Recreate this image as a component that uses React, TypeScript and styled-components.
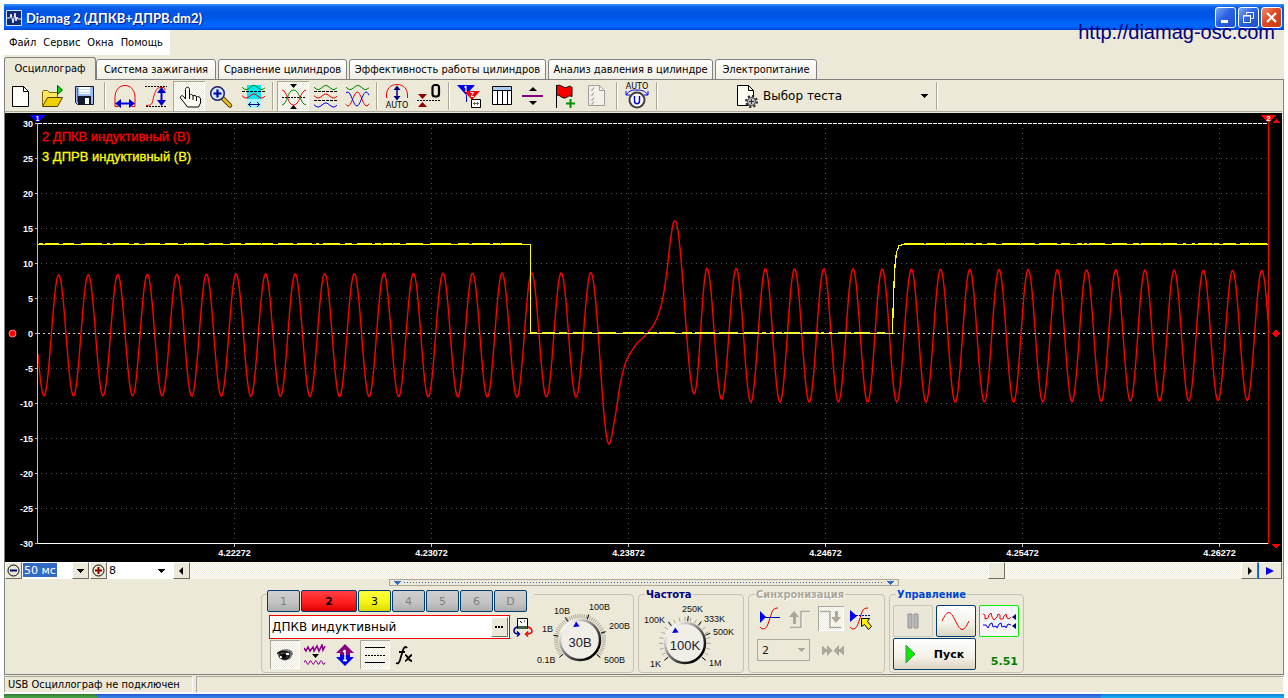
import React, { useLayoutEffect, useMemo, useRef, useState } from "react";
import styled, { createGlobalStyle, css } from "styled-components";

const face = "#ece9d8";
const uiFont = `"DejaVu Sans Condensed", "DejaVu Sans", sans-serif`;
const wideFont = `"DejaVu Sans", sans-serif`;
const plotFont = `"Liberation Sans", sans-serif`;
const checker = `repeating-conic-gradient(#ffffff 0 25%, ${face} 0 50%) 0 0 / 2px 2px`;

const GlobalStyle = createGlobalStyle`
  *, *::before, *::after { box-sizing: border-box; }
  body { margin: 0; background: #fff; color: #000; font: 11px ${uiFont}; }
  button, select, input { font: inherit; color: inherit; margin: 0; padding: 0; border-radius: 0; }
  svg { display: block; flex: none; }
`;

const Window = styled.div`
  min-height: 100vh;
  padding: 4px 4px 0;
  display: flex;
  flex-direction: column;
`;

/* ---------- title and menu ---------- */

const TitleBar = styled.header`
  position: relative;
  height: 26px;
  padding: 1px 2px 0 2px;
  display: flex;
  align-items: center;
  gap: 4px;
  background: linear-gradient(#3c94fb 0, #0b62ee 3px, #0054e3 8px, #0058ea 14px, #0066ff 20px, #0064fb 23px, #0042d0 26px);
`;

const Title = styled.h1`
  flex: 1;
  margin: 0;
  font: bold 13px/20px Lato, sans-serif;
  color: #fff;
  text-shadow: 1px 1px 1px #0a1883;
`;

const WindowButtons = styled.div`
  display: flex;
  gap: 2px;
`;

const WindowButton = styled.button<{ $danger?: boolean }>`
  width: 21px;
  height: 21px;
  display: grid;
  place-items: center;
  border: 1px solid #fff;
  border-radius: 3px;
  background: ${(p) =>
    p.$danger
      ? "linear-gradient(135deg, #eb8f77, #df4a22 45%, #c03a10)"
      : "linear-gradient(135deg, #7fa6f4, #2a63e2 45%, #1c4fd0)"};
`;

const SiteLink = styled.a`
  position: absolute;
  right: 9px;
  top: 16px;
  font: 20px/24px ${plotFont};
  color: #000080;
  text-decoration: none;
`;

const MenuRow = styled.div`
  height: 27px;
  background: ${face};
`;

const Menu = styled.nav`
  width: fit-content;
  height: 25px;
  padding: 0 7px 0 5px;
  display: flex;
  align-items: center;
  gap: 7px;
  background: #fff;
`;

const MenuItem = styled.button`
  border: 0;
  background: none;
  line-height: 16px;
`;

/* ---------- tabs and toolbar ---------- */

const Tabs = styled.div`
  height: 23px;
  display: flex;
  align-items: flex-end;
  gap: 2px;
  background: ${face};
  box-shadow: inset 0 -1px #808080;
`;

const Tab = styled.button<{ $width: number; $active?: boolean }>`
  width: ${(p) => p.$width}px;
  height: 21px;
  border: 1px solid #808080;
  border-radius: 3px 3px 0 0;
  background: linear-gradient(#ffffff, #f1efe4);
  line-height: 16px;
  white-space: nowrap;
  ${(p) =>
    p.$active &&
    css`
      height: 23px;
      margin-right: -2px;
      border-bottom: 0;
      background: ${face};
    `}
`;

const Page = styled.main`
  flex: 1;
  padding-right: 1px;
  display: flex;
  flex-direction: column;
  border: 1px solid #808080;
  border-top: 0;
  background: ${face};
`;

const Toolbar = styled.div`
  height: 32px;
  display: flex;
  align-items: center;
  border-bottom: 1px solid #aca899;
`;

const ToolButton = styled.button<{ $pressed?: boolean }>`
  width: 32px;
  height: 30px;
  border: 0;
  background: ${(p) => (p.$pressed ? checker : "none")};
  box-shadow: ${(p) => (p.$pressed ? "inset 1px 1px #aca899, inset -1px -1px #fff" : "none")};
`;

const Separator = styled.span`
  width: 8px;
  height: 28px;
  background: linear-gradient(90deg, transparent 3px, #aca899 3px 4px, #fff 4px 5px, transparent 5px);
`;

const TestPicker = styled.label`
  position: relative;
  width: 202px;
  margin-left: 70px;
  display: flex;
  align-items: center;
  gap: 4px;
`;

const TestSelect = styled.select`
  flex: 1;
  height: 28px;
  border: 0;
  appearance: none;
  background: none;
  font: 12px ${wideFont};
`;

const CaretOver = styled.span`
  position: absolute;
  right: 5px;
  pointer-events: none;
`;

/* ---------- oscilloscope ---------- */

const Scope = styled.div`
  flex: 1 0 449px;
  margin-top: 1px;
  display: flex;
  background: #000;
  overflow: hidden;
`;

const Plot = styled.svg`
  flex: 1 1 0;
  min-width: 0;
  font-family: ${plotFont};
`;

const ScrollRow = styled.div`
  height: 17px;
  display: flex;
`;

const Raised = styled.button<{ $width: number }>`
  width: ${(p) => p.$width}px;
  height: 17px;
  display: grid;
  place-items: center;
  border: 1px solid;
  border-color: #fff #716f64 #716f64 #fff;
  background: ${face};
`;

const PlayButton = styled(Raised)`
  border-left: 1px solid #0054e3;
`;

const Combo = styled.div<{ $width: number }>`
  position: relative;
  width: ${(p) => p.$width}px;
  background: #fff;
`;

const ComboSelect = styled.select<{ $selected?: boolean }>`
  width: 100%;
  height: 17px;
  padding-left: 2px;
  border: 0;
  appearance: none;
  font: 11px/15px ${wideFont};
  ${(p) =>
    p.$selected
      ? css`
          color: #fff;
          background: linear-gradient(#316ac5, #316ac5) no-repeat 1px 1px / 34px 14px #fff;
        `
      : css`
          background: #fff;
        `}
`;

const ComboArrow = styled.span<{ $raised?: boolean }>`
  position: absolute;
  right: ${(p) => (p.$raised ? 1 : 3)}px;
  top: 0;
  width: 17px;
  height: 17px;
  display: grid;
  place-items: center;
  pointer-events: none;
  ${(p) =>
    p.$raised &&
    css`
      border: 1px solid;
      border-color: #fff #716f64 #716f64 #fff;
      background: ${face};
    `}
`;

const ScrollTrack = styled.input`
  flex: 1;
  min-width: 0;
  height: 17px;
  appearance: none;
  background: ${checker};
  &::-webkit-slider-thumb {
    appearance: none;
    width: 17px;
    height: 17px;
    border: 1px solid;
    border-color: #fff #716f64 #716f64 #fff;
    background: ${face};
  }
`;

const Splitter = styled.div`
  width: 510px;
  height: 7px;
  margin: 0 auto;
  padding: 0 4px;
  display: flex;
  align-items: center;
  gap: 3px;
  border: 1px solid #aca899;
`;

const SplitterDots = styled.span`
  flex: 1;
  height: 1px;
  background: repeating-linear-gradient(90deg, #316ac5 0 1px, transparent 1px 3px);
`;

/* ---------- control groups ---------- */

const Panel = styled.div`
  display: flex;
  justify-content: center;
  align-items: flex-start;
  gap: 4px;
  padding: 8px 2px 1px 0;
`;

const Group = styled.section<{ $width: number }>`
  width: ${(p) => p.$width}px;
  height: 79px;
  border: 1px solid #c6c3b5;
  border-radius: 4px;
`;

const ChannelGroup = styled(Group)`
  display: flex;
`;

const GroupTitle = styled.h2<{ $color: string; $etched?: boolean }>`
  width: fit-content;
  height: 14px;
  margin: -8px 0 0 6px;
  padding: 0 1px;
  background: ${face};
  color: ${(p) => p.$color};
  font: bold 11px/16px ${uiFont};
  text-shadow: ${(p) => (p.$etched ? "1px 1px #fff" : "none")};
`;

const Channel = styled.div`
  width: 272px;
`;

const ChannelTabs = styled.div`
  margin: -5px 0 0 5px;
  display: flex;
  gap: 1px;
  background: ${face};
`;

const ChannelButton = styled.button<{ $tone?: "red" | "yellow" }>`
  width: ${(p) => (p.$tone === "red" ? 56 : 33)}px;
  height: 22px;
  border: 1px solid #003c74;
  border-radius: 2px;
  font: ${(p) => (p.$tone === "red" ? "bold" : "normal")} 11px ${wideFont};
  color: ${(p) => (p.$tone ? "#000" : "#808080")};
  background: ${(p) =>
    p.$tone === "red"
      ? "linear-gradient(#ff4040, #ff1c1c 60%, #dd0000)"
      : p.$tone === "yellow"
        ? "linear-gradient(#ffff40, #f4f410 60%, #d8d800)"
        : "linear-gradient(#cfcfcf, #c3c3c3 60%, #adadad)"};
`;

const NameRow = styled.div`
  margin: 3px 0 0 7px;
  display: flex;
  align-items: center;
  gap: 3px;
`;

const NameBox = styled.div`
  width: 241px;
  height: 24px;
  padding-right: 1px;
  display: flex;
  align-items: center;
  border: 1px solid #f00000;
  background: #fff;
`;

const NameInput = styled.input`
  flex: 1;
  min-width: 0;
  height: 20px;
  padding-left: 2px;
  border: 0;
  outline: 0;
  background: none;
  font: 12px ${wideFont};
`;

const MoreButton = styled(Raised)`
  height: 20px;
`;

const PlainButton = styled.button`
  border: 0;
  background: none;
`;

const IconRow = styled.div`
  margin: 1px 0 0 8px;
  display: flex;
`;

const SmallTool = styled.button<{ $pressed?: boolean; $width: number; $height: number }>`
  width: ${(p) => p.$width}px;
  height: ${(p) => p.$height}px;
  display: grid;
  place-items: center;
  border: 0;
  background: ${(p) => (p.$pressed ? checker : "none")};
  box-shadow: ${(p) => (p.$pressed ? "inset 1px 1px #aca899, inset -1px -1px #fff" : "none")};
`;

const SyncTools = styled.div`
  padding: 5px 10px 0 8px;
  display: flex;
  justify-content: space-between;
`;

const SyncRow = styled.div`
  padding: 8px 8px 0;
  display: flex;
  align-items: center;
  gap: 11px;
`;

const SyncCombo = styled.label`
  position: relative;
  width: 53px;
  display: flex;
  align-items: center;
`;

const SyncSelect = styled.select`
  width: 100%;
  height: 22px;
  padding-left: 4px;
  border: 1px solid #aca899;
  appearance: none;
  background: ${face};
  color: #202020;
  font: 11px ${wideFont};
`;

const RunGrid = styled.div`
  padding: 4px 3px 0;
  display: grid;
  grid-template-columns: 40px 40px 40px;
  grid-auto-rows: 32px;
  gap: 1px 3px;
`;

const RunButton = styled.button<{ $kind?: "disabled" | "selected"; $wide?: boolean }>`
  grid-column: span ${(p) => (p.$wide ? 2 : 1)};
  display: flex;
  align-items: center;
  justify-content: center;
  gap: 18px;
  border: 1px solid ${(p) => (p.$kind === "disabled" ? "#c9c7ba" : p.$kind === "selected" ? "#00f000" : "#003c74")};
  border-radius: 2px;
  background: ${(p) =>
    p.$kind === "disabled" ? "#eae7d9" : p.$kind === "selected" ? "#f5f4f8" : "linear-gradient(#ffffff, #f3f1e8 60%, #dcd6bf)"};
  font: bold 11px ${wideFont};
`;

const Reading = styled.output`
  align-self: end;
  padding-right: 1px;
  text-align: right;
  color: #008000;
  font: bold 11px/16px ${wideFont};
`;

/* ---------- status ---------- */

const StatusBar = styled.footer`
  height: 18px;
  padding-top: 1px;
  display: flex;
  gap: 3px;
  background: ${face};
`;

const StatusCell = styled.div<{ $grow?: boolean }>`
  flex: ${(p) => (p.$grow ? "1" : "0 0 189px")};
  padding-left: 3px;
  line-height: 16px;
  border: 1px solid;
  border-color: #aca899 #fff #fff #aca899;
`;

const TaskBar = styled.div`
  height: 5px;
  display: grid;
  grid-template-columns: 93px 1fr 183px;
  border-top: 1px solid #fff;
  background: linear-gradient(#1f5ad0, #3c86ea);
  & > :first-child { background: linear-gradient(#2f7a2f, #4ea84c); border-radius: 0 3px 0 0; }
  & > :last-child { background: linear-gradient(#0e7bd6, #18b4f4); }
`;

/* ---------- icons ---------- */

const wave = (x0: number, x1: number, y: number, amp: number, periods: number, phase = 0) => {
  let d = "";
  for (let x = x0; x <= x1; x += 1) {
    const v = y - amp * Math.sin(((x - x0) / (x1 - x0)) * periods * 2 * Math.PI + phase);
    d += `${d ? "L" : "M"}${x} ${v.toFixed(1)}`;
  }
  return d;
};

const Icon = ({ children, w = 32, h = 30 }: { children: React.ReactNode; w?: number; h?: number }) => (
  <svg width={w} height={h} viewBox={`0 0 ${w} ${h}`} fill="none" stroke="#000" aria-hidden="true">
    {children}
  </svg>
);

const Caret = ({ color = "#000" }: { color?: string }) => (
  <svg width="7" height="4" viewBox="0 0 7 4" shapeRendering="crispEdges" aria-hidden="true">
    <path d="M0 0h7L3.5 4z" fill={color} />
  </svg>
);

const red = "#f00000";
const green = "#008a00";
const blue = "#0000f0";

const NewIcon = () => (
  <Icon>
    <path d="M7.5 5.5h11l5 5v15h-16z" fill="#fffffa" />
    <path d="M18.5 5.5v5h5" />
  </Icon>
);
const OpenIcon = () => (
  <Icon>
    <path d="M5.5 24.5v-14l1-1h4l2 2h8v5" fill="#ffe860" stroke="#806000" />
    <path d="M5.5 25.5l5-9h15l-5 9z" fill="#f0d000" stroke="#504000" />
    <path d="M20.5 4.5l5 4.5-5 4.5z" fill="#00d800" stroke="#005000" />
  </Icon>
);
const SaveIcon = () => (
  <Icon>
    <path d="M6.5 5.5h18v18h-16l-2-2z" fill="#9dbcf0" stroke="#101830" />
    <path d="M10 6h11v7H10z" fill="#fff" stroke="none" />
    <path d="M10 8.5h11M10 11.5h11" stroke="#c8d8f0" />
    <path d="M9 15h13v8H9z" fill="#101830" stroke="none" />
    <path d="M16 17h4v6h-4z" fill="#fff" stroke="none" />
    <path d="M8.5 7v14" stroke="#3f68c0" />
  </Icon>
);
const PeriodIcon = () => (
  <Icon>
    <path d="M9.5 25.5h-3.5v-9c0-7 4-12 10-12s10 5 10 12v9h-3.5" stroke={red} />
    <path d="M10 22.5h12" stroke={blue} strokeWidth="2" />
    <path d="M6 22.5l6-4.500v9zM26 22.5l-6-4.5v9z" fill="#0000c8" stroke="none" />
  </Icon>
);
const AmplitudeIcon = () => (
  <Icon>
    <path d="M4 5.5h22M5 25.5h20" strokeDasharray="2 1" />
    <path d="M5 24.5c8 0 6-4 8-10s3-8 7-8h2c2 0 2 2 2 3" stroke={red} />
    <path d="M20.5 10v12" stroke={blue} strokeWidth="2" />
    <path d="M20.5 6l4.5 6h-9zM20.5 25l4.5-6h-9z" fill="#0000c8" stroke="none" />
  </Icon>
);
const HandIcon = () => (
  <Icon>
    <path
      d="M12.5 18V8.5c0-3 4-3 4 0v5.5c1-1 3.5-.5 3.5 1c1-1 3.5-.5 3.5 1c1.5-1 4 0 4 2v4l-2 4h-11l-3-4-4-5c-.5-2.5 2-3 3.5-1z"
      fill="#fffdf4"
    />
    <path d="M16.5 14v4M20 15v4M23.5 16v4" />
  </Icon>
);
const ZoomIcon = () => (
  <Icon>
    <path d="M18 17.5l7 7" stroke="#403000" strokeWidth="4.5" strokeLinecap="round" />
    <path d="M18 17.5l7 7" stroke="#f0c020" strokeWidth="2.5" strokeLinecap="round" />
    <circle cx="12.5" cy="12.5" r="6.8" fill="#cfe8ff" stroke="#202060" strokeWidth="1.5" />
    <path d="M8.5 12.5h8M12.5 8.5v8" stroke="#0000a8" strokeWidth="2.2" />
  </Icon>
);
const WindowIcon = () => (
  <Icon>
    <path d="M10 4h14v14H10z" fill="#00e8f8" stroke="none" />
    <path d="M10 18h14v9H10z" fill="#a8f4fc" stroke="none" />
    <path d={wave(5, 28, 6.5, 2, 1.5, 3)} stroke={green} />
    <path d="M5 10.5h24" strokeDasharray="3 1" />
    <path d={wave(5, 28, 15, 2, 1.5, 3)} stroke={red} />
    <path d="M11 23.5h12M14 21l-2.5 2.5L14 26M20 21l2.5 2.5L20 26" stroke="#000090" />
  </Icon>
);
const CrossIcon = () => (
  <Icon>
    <path d="M5 16.5h24" strokeDasharray="2 1" />
    <path d="M5 9c6 1 5 15 11.5 15S23 10 29 9" stroke={red} />
    <path d="M5 24c6-1 5-15 11.5-15S23 23 29 24" stroke={green} />
    <path d="M13 3h7l-3.5 4zM13 28h7l-3.5-4z" fill="#000" stroke="none" />
  </Icon>
);
const ThreeWavesIcon = () => (
  <Icon>
    <path d={wave(5, 28, 6.5, 2, 1.5, 3)} stroke={green} />
    <path d="M5 10.5h24M5 19.5h24" strokeDasharray="3 1" />
    <path d={wave(5, 28, 15, 2, 1.5, 3)} stroke={red} />
    <path d={wave(5, 28, 24, 2, 1.5, 3)} stroke={blue} />
  </Icon>
);
const OverlayIcon = () => (
  <Icon>
    <path d={wave(5, 28, 6.5, 2, 1.5, 3)} stroke={green} />
    <path d={wave(5, 28, 18, 7, 1.25, 4)} stroke={red} />
    <path d={wave(5, 28, 18, 7, 1.25, 1)} stroke={blue} />
  </Icon>
);
const Tiny = styled.text`
  font: 8px ${wideFont};
  stroke: none;
  fill: #000;
`;
const AutoScaleIcon = () => (
  <Icon>
    <path d="M5.5 17v-3c0-6 4-10.5 10.5-10.5S26.5 8 26.5 14v3" stroke={red} />
    <path d="M16 8v8" stroke="#000080" strokeWidth="1.5" />
    <path d="M16 4.5l3.5 4.5h-7zM16 19.5l3.5-4.5h-7z" fill="#000080" stroke="none" />
    <Tiny x="16" y="27" textAnchor="middle">AUTO</Tiny>
  </Icon>
);
const ZeroIcon = () => (
  <Icon>
    <rect x="19.5" y="4" width="6.5" height="11.5" rx="2.5" strokeWidth="2.2" />
    <path d="M4 19.5h24" strokeDasharray="2 1" />
    <path d="M5 13h9l-4.5 5zM5 26h9l-4.5-5z" fill="#900000" stroke="none" />
  </Icon>
);
const MarkersIcon = () => (
  <Icon>
    <path d="M4 4h18l-9 10z" fill={blue} stroke="none" />
    <path d="M11 10h16l-8 9z" fill={red} stroke="none" />
    <path d="M13.5 14v7" stroke={blue} />
    <path d="M13 5v6M11.5 6.5L13 5" stroke="#fff" strokeWidth="1.2" />
    <path d="M17.5 11.5h3l-2.5 4h3" stroke="#fff" />
    <path d="M18.5 18.5h9v8h-9z" fill="#fff" />
    <path d="M20 22.5h6M21.5 21v3M24.5 21v3" stroke="#606060" />
  </Icon>
);
const TableIcon = () => (
  <Icon>
    <path d="M7.5 5.5h19v18h-19z" fill="#fff" />
    <path d="M8 6h18v3H8z" fill="#a8ccf4" stroke="none" />
    <path d="M7 9.5h20M12.5 10v14M17.5 10v14M22.5 10v14" />
  </Icon>
);
const LevelIcon = () => (
  <Icon>
    <path d="M5 15h21" stroke="#800080" strokeWidth="2" />
    <path d="M12 10h8l-4-4zM12 20h8l-4 4z" fill="#000" stroke="none" />
  </Icon>
);
const FlagIcon = () => (
  <Icon>
    <path d="M7.5 5c4-3 7 3 10 1.5s4-2 5.5 0v9c-4-2-5 2-8 1.5S10 13 7.5 14.5z" fill="#f80000" />
    <path d="M7.5 4v23" />
    <path d="M21.5 18v9M17 22.5h9" stroke="#009000" strokeWidth="2" />
  </Icon>
);
const ChecklistIcon = () => (
  <Icon>
    <path d="M7.5 4.5h11l5 5v15h-16z" fill="#f4f2e8" stroke="#a0a0a0" />
    <path d="M18.5 4.5v5h5" stroke="#a0a0a0" />
    <path d="M10 8.5l1 1 2-3M10 13.5l1 1 2-3M10 18.5l1 1 2-3M10 22.5l1 1 2-3" stroke="#909090" />
  </Icon>
);
const AutoKnobIcon = () => (
  <Icon>
    <Tiny x="16" y="8" textAnchor="middle">AUTO</Tiny>
    <path d="M5 14c4-5 6-5 11-5s8 1 11 5M5 10v4h4M27 10v4h-4" stroke={blue} />
    <circle cx="16" cy="19" r="7.5" fill="#fff" stroke="#404040" strokeWidth="2" />
    <path d="M13.5 15v5c0 3.5 5 3.5 5 0v-5" stroke={blue} strokeWidth="1.5" />
  </Icon>
);

type Tool = [string, React.FC, boolean?];
const toolGroups: Tool[][] = [
  [["Новый", NewIcon], ["Открыть", OpenIcon], ["Сохранить", SaveIcon]],
  [["Период", PeriodIcon], ["Амплитуда", AmplitudeIcon], ["Перемещение", HandIcon, true], ["Масштаб", ZoomIcon], ["Окно", WindowIcon]],
  [["Общий ноль", CrossIcon, true], ["Раздельно", ThreeWavesIcon], ["Наложение", OverlayIcon]],
  [["Автомасштаб", AutoScaleIcon], ["Ноль", ZeroIcon]],
  [["Маркеры", MarkersIcon], ["Таблица", TableIcon], ["Уровень", LevelIcon], ["Флаг", FlagIcon], ["Список", ChecklistIcon]],
  [["Авто", AutoKnobIcon]],
];

/* ---------- waveforms: x in steps along the sweep, y in volts ---------- */

const SWEEP = 1231;
type Pt = [number, number];

const between = (a: Pt, b: Pt): Pt[] => {
  const out: Pt[] = [];
  for (let x = Math.ceil(a[0]); x < b[0]; x += 1) {
    const t = (x - a[0]) / (b[0] - a[0]);
    out.push([x, a[1] + ((b[1] - a[1]) * (1 - Math.cos(Math.PI * t))) / 2]);
  }
  return out;
};

/* Hermite interpolation through unevenly spaced samples, flat at both ends. */
const smooth = (pts: Pt[]): Pt[] => {
  const slope = (i: number) =>
    i === 0 || i === pts.length - 1 ? 0 : (pts[i + 1][1] - pts[i - 1][1]) / (pts[i + 1][0] - pts[i - 1][0]);
  const out: Pt[] = [];
  for (let i = 0; i < pts.length - 1; i += 1) {
    const [x0, y0] = pts[i];
    const [x1, y1] = pts[i + 1];
    const h = x1 - x0;
    for (let x = x0; x < x1; x += 1) {
      const t = (x - x0) / h;
      const t2 = t * t;
      const t3 = t2 * t;
      out.push([
        x,
        (2 * t3 - 3 * t2 + 1) * y0 + (t3 - 2 * t2 + t) * h * slope(i) + (3 * t2 - 2 * t3) * y1 + (t3 - t2) * h * slope(i + 1),
      ]);
    }
  }
  return out;
};

const crankSignal = (): Pt[] => {
  const before: Pt[] = [];
  for (let k = -1; k <= 18; k += 1) {
    const x = 20.7 + k * 29.56;
    before.push([x, 8.4 + Math.max(0, k) * 0.016]);
    if (k < 18) before.push([x + 14.8, -8.9 - Math.max(0, k) * 0.012]);
  }
  before.push([571, -15.8]);
  const gap: Pt[] = [
    [571, -15.8], [577, -12], [582, -7.4], [587, -4.4], [592, -2.9], [599, -1.4], [605, -0.6], [610, 0.2],
    [615, 1.1], [620, 2.6], [625, 5.2], [629, 9], [632, 12.8], [635, 15.6], [637, 16.1],
  ];
  const after: Pt[] = [[637, 16.1], [656.3, -8.6]];
  for (let k = 0; k <= 20; k += 1) {
    const x = 669 + k * 29.2;
    after.push([x, 9.3 - k * 0.015]);
    after.push([x + 14.6, k === 0 ? -9.4 : -9.8 + Math.max(0, k - 10) * 0.03]);
  }
  const pts: Pt[] = [];
  for (let i = 1; i < before.length; i += 1) pts.push(...between(before[i - 1], before[i]));
  pts.push(...smooth(gap));
  for (let i = 1; i < after.length; i += 1) pts.push(...between(after[i - 1], after[i]));
  return pts.filter(([x]) => x >= 0 && x <= SWEEP);
};

const camSignal: Pt[] = [
  [0, 12.7], [492.5, 12.7], [492.5, 0.05], [854.5, 0.05], [855, 3], [856, 7], [857, 9.7], [858.5, 11.6], [861, 12.5],
  [865, 12.7], [1231, 12.7],
];

const noiseRuns = (from: number, to: number, seed: number): Pt[] => {
  const out: Pt[] = [];
  let s = seed;
  let x = from;
  while (x < to - 12) {
    s = (s * 16807) % 2147483647;
    const len = 3 + (s % 19);
    out.push([x, Math.min(x + len, to)]);
    x += len + 1 + ((s >> 5) % 7);
  }
  return out;
};

const ScopePlot = () => {
  const box = useRef<HTMLDivElement>(null);
  const [size, setSize] = useState({ w: 1277, h: 449 });
  useLayoutEffect(() => {
    const el = box.current;
    if (!el) return;
    const measure = () => setSize({ w: el.clientWidth, h: el.clientHeight });
    measure();
    const observer = new ResizeObserver(measure);
    observer.observe(el);
    return () => observer.disconnect();
  }, []);

  const left = 33;
  const right = size.w - 13;
  const top = 10;
  const bottom = size.h - 19;
  const px = (x: number) => left + (x / SWEEP) * (right - left);
  const py = (v: number) => top + ((30 - v) / 60) * (bottom - top);
  const mid = Math.round(py(0)) + 0.5;
  const crank = useMemo(crankSignal, []);
  const line = (pts: Pt[]) => pts.map(([x, v], i) => `${i ? "L" : "M"}${px(x).toFixed(1)} ${(py(v) + 0.5).toFixed(1)}`).join("");
  const runs = (list: Pt[], v: number) =>
    list.map(([a, b]) => `M${Math.round(px(a))} ${Math.round(py(v)) - 0.5}H${Math.round(px(b))}`).join("");
  const volts = Array.from({ length: 13 }, (_, i) => 30 - i * 5);
  const times = ["4.22272", "4.23072", "4.23872", "4.24672", "4.25472", "4.26272"];
  const timeX = (i: number) => Math.round(px(196 + i * 197)) + 0.5;

  return (
    <Scope ref={box}>
      <Plot role="img" aria-label="Осциллограмма" fill="none" shapeRendering="crispEdges">
        {volts.map((v) => {
          const y = Math.round(py(v)) + 0.5;
          return (
            <g key={v}>
              {v !== 30 && v !== 0 && <path d={`M${left + 3} ${y}H${right}`} stroke="#505050" strokeDasharray="1 4" />}
              <path d={`M${left - 3} ${y}h3`} stroke="#c0c0c0" />
              <text x={left - 5} y={y + 3} fill="#fff" fontSize="9" fontWeight="bold" textAnchor="end">
                {v}
              </text>
            </g>
          );
        })}
        {times.map((t, i) => (
          <g key={t}>
            <path d={`M${timeX(i)} ${top + 5}V${bottom}`} stroke="#505050" strokeDasharray="1 4" />
            <path d={`M${timeX(i)} ${bottom}v4`} stroke="#c0c0c0" />
            <text x={timeX(i)} y={bottom + 13} fill="#fff" fontSize="9" fontWeight="bold" textAnchor="middle">
              {t}
            </text>
          </g>
        ))}
        <path d={`M${left} ${top + 0.5}H${right}`} stroke="#fff" strokeDasharray="4 1" />
        <path d={`M${left} ${bottom + 0.5}H${right}`} stroke="#fff" />
        <path d={line(crank)} stroke="#ff0000" strokeWidth="1.4" shapeRendering="auto" />
        <path d={line(camSignal)} stroke="#ffff00" strokeWidth="1.3" />
        <path d={runs(noiseRuns(1, 492, 7), 12.7)} stroke="#ffff00" />
        <path d={runs(noiseRuns(493, 854, 21), 0)} stroke="#ffff00" />
        <path d={runs(noiseRuns(866, 1229, 5), 12.7)} stroke="#ffff00" />
        <path d={`M${left} ${mid}H${right}`} stroke="#d8d8d8" strokeDasharray="2 3" />
        <path d={`M${left - 0.5} ${top}V${bottom}`} stroke="#c0c0c0" />
        <path d={`M${right - 0.5} ${top}V${bottom + 1}`} stroke="#ff0000" />
        <path d={`M${left - 8} 2h15l-7.5 8z`} fill="#0000ff" />
        <path d={`M${right - 8} 2h15l-7.5 8z`} fill="#ff0000" />
        <text x={left - 0.5} y="8" fill="#fff" fontSize="7" fontWeight="bold" textAnchor="middle">1</text>
        <text x={right - 0.5} y="8" fill="#fff" fontSize="8" fontWeight="bold" textAnchor="middle">2</text>
        <path d={`M${right + 3} 10h8l-4-4z`} fill="#ff0000" />
        <path d={`M${right + 3} ${bottom + 1}h8l-4 5z`} fill="#ff0000" />
        <path d={`M${right + 3} ${mid}l4-4 4 4-4 4z`} fill="#ff0000" />
        <circle cx="7.5" cy={mid} r="3.5" fill="#ff0000" stroke="#ff8080" shapeRendering="auto" />
        <text x="37" y="28" fill="#ff0000" stroke="#ff0000" strokeWidth="0.3" fontSize="13">2 ДПКВ индуктивный (В)</text>
        <text x="37" y="48" fill="#ffff00" stroke="#ffff00" strokeWidth="0.3" fontSize="13">3 ДПРВ индуктивный (В)</text>
      </Plot>
    </Scope>
  );
};

/* ---------- dials ---------- */

type Mark = { text: string; angle: number; x: number; y: number };

const Dial = ({
  id, w, h, cx, cy, value, marks, step, pointer,
}: {
  id: string; w: number; h: number; cx: number; cy: number; value: string; marks: Mark[]; step: number; pointer: number;
}) => {
  const tick = (deg: number, r0: number, r1: number) => {
    const a = (deg * Math.PI) / 180;
    return `M${cx + r0 * Math.sin(a)} ${cy - r0 * Math.cos(a)}L${cx + r1 * Math.sin(a)} ${cy - r1 * Math.cos(a)}`;
  };
  const minor: number[] = [];
  for (let a = -130; a <= 130; a += step) minor.push(a);
  return (
    <svg width={w} height={h} viewBox={`0 0 ${w} ${h}`} fill="none" fontFamily="Liberation Sans, sans-serif" role="img" aria-label={value}>
      <defs>
        <linearGradient id={id} x1="0" y1="0" x2="1" y2="1">
          <stop offset="0.15" stopColor="#f4f4f4" />
          <stop offset="0.5" stopColor="#707070" />
          <stop offset="0.85" stopColor="#000" />
        </linearGradient>
      </defs>
      <path d={minor.map((a) => tick(a, 22, 26)).join("")} stroke="#aaa797" />
      <path d={marks.map((m) => tick(m.angle, 22, 27)).join("")} stroke="#000" />
      <circle cx={cx} cy={cy} r="20" fill="#f0eee6" stroke={`url(#${id})`} strokeWidth="2.5" />
      <path d="M-3 2.5L0-3 3.500 2z" fill={blue} transform={`translate(${cx + 16 * Math.sin((pointer * Math.PI) / 180)} ${cy - 16 * Math.cos((pointer * Math.PI) / 180)})`} />
      <text x={cx} y={cy + 7} fontSize="13" fill="#202030" textAnchor="middle">{value}</text>
      {marks.map((m) => (
        <text key={m.text} x={m.x} y={m.y} fontSize="9" fill="#101010">{m.text}</text>
      ))}
    </svg>
  );
};

const voltMarks: Mark[] = [
  { text: "0.1В", angle: -130, x: 3, y: 68 },
  { text: "1В", angle: -80, x: 8, y: 37 },
  { text: "10В", angle: -33, x: 20, y: 19 },
  { text: "100В", angle: 19, x: 55, y: 15 },
  { text: "200В", angle: 72, x: 75, y: 34 },
  { text: "500В", angle: 131, x: 70, y: 68 },
];
const rateMarks: Mark[] = [
  { text: "1K", angle: -130, x: 11, y: 66 },
  { text: "100K", angle: -38, x: 5, y: 22 },
  { text: "250K", angle: 7, x: 43, y: 11 },
  { text: "333K", angle: 37, x: 65, y: 21 },
  { text: "500K", angle: 69, x: 74, y: 34 },
  { text: "1M", angle: 130, x: 70, y: 65 },
];

/* ---------- small control icons ---------- */

const EyeIcon = () => (
  <Icon w={18} h={14}>
    <path d="M1 5c3-4 10-5 15-2l1 3-3 5c-4 2-8 2-11-1z" fill="#707070" stroke="none" />
    <path d="M1 5.5c4-3 9-3 13 0M4 5v4c3 3 7 3 9 0V5" fill="#303030" />
    <path d="M4 8h2v2H4zM10 5h3v2h-3z" fill="#fff" stroke="none" />
    <circle cx="8" cy="8" r="2" fill="#000" />
  </Icon>
);
const FilterIcon = () => (
  <Icon w={22} h={22}>
    <path d="M0 4l2 3 2-4 2 4 3-4 1 4 3-5 2 5 3-6 1 5 2-4" stroke="#900090" strokeWidth="1.6" />
    <path d="M8 10h7l-3.5 4z" fill="#000" stroke="none" />
    <path d={wave(0, 21, 18.5, 2, 4)} stroke="#900090" />
  </Icon>
);
const FlipIcon = () => (
  <Icon w={18} h={22}>
    <path d="M9 0l9 9h-4v2H4V9H0z" fill="#800080" stroke="none" />
    <path d="M9 22l9-9h-4v-2H4v2H0z" fill={blue} stroke="none" />
    <path d="M9 6v10M7 8l2-2M7 16.5h4" stroke="#fff" strokeWidth="1.5" />
  </Icon>
);
const LinesIcon = () => (
  <Icon w={22} h={18}>
    <path d="M1 1.5h20M1 16.5h20" />
    <path d="M1 9.5h20" strokeDasharray="2 1" />
  </Icon>
);
const FxIcon = () => (
  <Icon w={20} h={20}>
    <path d="M12 3c-1-2-3-1-4 2L5 15c-1 3-2 4-4 3M4 7h6" strokeWidth="1.8" />
    <path d="M10 10c3 0 3 6 7 6M17 10c-2 0-5 6-7 6" strokeWidth="1.8" />
  </Icon>
);
const ProbeIcon = () => (
  <Icon w={20} h={20}>
    <path d="M4.5 1.5h10v10h-10z" fill="#fff" />
    <path d="M7 4l2 2M11 4h1" />
    <path d="M5 9h9v3H5z" fill="#406040" stroke="none" />
    <path d="M4 10c-3 1-3 3-3 4s1 3 5 3M4 14.5l2.5 2.5L4 19.5" stroke="#000090" strokeWidth="1.5" />
    <path d="M15 10c3 1 4 3 4 4s-1 3-5 3M15 14.5L12.5 17l2.5 2.5" stroke={red} strokeWidth="1.5" />
  </Icon>
);
const sCurve = "M1 20c2 3 6 3 8-3l4-12c1-3 3-4 6-4";
const TriggerIcon = () => (
  <Icon w={22} h={24}>
    <path d={sCurve} stroke={red} />
    <path d="M1 4l6 6-6 6z" fill={blue} stroke="none" />
    <path d="M6 10.5h15" stroke="#0000c0" />
  </Icon>
);
const RiseIcon = () => (
  <Icon w={22} h={20}>
    <path d="M1 18.5h11V2.5h9" stroke="#fff" transform="translate(1 1)" />
    <path d="M1 18.5h11V2.5h9" stroke="#aca899" strokeWidth="1.5" />
    <path d="M5 2l5 6H7v7H4V8H0z" fill="#aca899" stroke="none" />
  </Icon>
);
const FallIcon = () => (
  <Icon w={22} h={20}>
    <path d="M0 2.5h10v16h11" stroke="#fff" transform="translate(1 1)" />
    <path d="M0 2.5h10v16h11" stroke="#aca899" strokeWidth="1.5" />
    <path d="M16 14l5-6h-3V2h-3v6h-4z" fill="#aca899" stroke="none" />
  </Icon>
);
const PickIcon = () => (
  <Icon w={24} h={24}>
    <path d={sCurve} stroke={red} />
    <path d="M1 3l7 6-7 6z" fill={blue} stroke="none" />
    <path d="M7 8.5h14" stroke="#0000a0" strokeDasharray="2 1" />
    <path d="M12.5 11.5l8 0-2 3 4 5-3 3-4-5-3 2z" fill="#fff000" />
  </Icon>
);
const SqueezeIcon = () => (
  <Icon w={24} h={13}>
    <path d="M1 1.5v10l4-3.500h1V12l5.500-5.500L6 1v4H5z" fill="#aca899" stroke="none" />
    <path d="M23 1.5v10l-4-3.500h-1V12l-5.500-5.500L18 1v4h1z" fill="#aca899" stroke="none" />
    <path d="M4 6.5h4M16 6.5h4" stroke="#aca899" strokeWidth="3" />
  </Icon>
);
const PauseIcon = () => (
  <Icon w={12} h={16}>
    <path d="M1 1h4v14H1zM7 1h4v14H7z" fill="#b8b8b8" stroke="#909090" />
  </Icon>
);
const SineIcon = () => (
  <Icon w={28} h={20}>
    <path d={wave(0, 27, 10, 8.5, 1)} stroke={red} />
  </Icon>
);
const StreamsIcon = () => (
  <Icon w={33} h={20}>
    <path d="M0 3l2 1v4l3-1 1-3 2-2 1 4 2 3 3-3 1-3 2 1v4l3 0 1-3 2-2 1 4 2 1 2-2" stroke={red} />
    <path d="M0 14h3l2 3 2-4 2-1 1 4 3-1 1 2 2-4 2-1 1 4 3-1 1 2 2-4 3 1" stroke={blue} />
    <path d="M33 3v6l-4-3zM33 12v6l-4-3z" fill="#000080" stroke="none" />
  </Icon>
);

const tabs: [string, number][] = [
  ["Осциллограф", 92], ["Система зажигания", 120], ["Сравнение цилиндров", 129],
  ["Эффективность работы цилиндров", 197], ["Анализ давления в цилиндре", 165], ["Электропитание", 102],
];

export default function App() {
  return (
    <Window>
      <GlobalStyle />
      <TitleBar>
        <svg width="16" height="16" viewBox="0 0 16 16" aria-hidden="true">
          <path d="M.5.5h15v15H.5z" fill="#102a78" stroke="#d8e4ff" />
          <path d="M1 8h3l1-4 2 9 2-10 1 8 1-4 1 2h3" fill="none" stroke="#fff" />
        </svg>
        <Title>Diamag 2 (ДПКВ+ДПРВ.dm2)</Title>
        <WindowButtons>
          <WindowButton aria-label="Свернуть">
            <Icon w={13} h={13}><path d="M2 10.5h7" stroke="#fff" strokeWidth="3" /></Icon>
          </WindowButton>
          <WindowButton aria-label="Восстановить">
            <Icon w={13} h={13}>
              <path d="M4.5 3.5v-2h7v6h-2M4 1.5h8M1.5 4.5h7v7h-7zM1 5h8" stroke="#fff" />
            </Icon>
          </WindowButton>
          <WindowButton $danger aria-label="Закрыть">
            <Icon w={13} h={13}><path d="M2 2l9 9M11 2l-9 9" stroke="#fff" strokeWidth="2.2" /></Icon>
          </WindowButton>
        </WindowButtons>
        <SiteLink href="http://diamag-osc.com">http://diamag-osc.com</SiteLink>
      </TitleBar>
      <MenuRow>
        <Menu>
          {["Файл", "Сервис", "Окна", "Помощь"].map((m) => <MenuItem key={m}>{m}</MenuItem>)}
        </Menu>
      </MenuRow>
      <Tabs role="tablist">
        {tabs.map(([name, width], i) => (
          <Tab key={name} role="tab" aria-selected={i === 0} $width={width} $active={i === 0}>{name}</Tab>
        ))}
      </Tabs>
      <Page>
        <Toolbar>
          {toolGroups.map((group, i) => (
            <React.Fragment key={i}>
              {group.map(([label, Glyph, pressed]) => (
                <ToolButton key={label} aria-label={label} $pressed={pressed}><Glyph /></ToolButton>
              ))}
              <Separator />
            </React.Fragment>
          ))}
          <TestPicker>
            <Icon w={28} h={28}>
              <path d="M6.5 3.5h11l5 5v15h-16z" fill="#fffff4" />
              <path d="M17.5 3.5v5h5" />
              <circle cx="20.5" cy="19.5" r="5" fill="#c0c0c0" stroke="#303030" strokeWidth="3" strokeDasharray="2 1.9" />
              <circle cx="20.5" cy="19.5" r="4" fill="#c0c0c0" stroke="#505050" />
              <path d="M20.5 17v5M18 19.5h5" stroke="#303030" />
            </Icon>
            <TestSelect aria-label="Выбор теста"><option>Выбор теста</option></TestSelect>
            <CaretOver><Caret /></CaretOver>
          </TestPicker>
          <Separator />
        </Toolbar>
        <ScopePlot />
        <ScrollRow>
          <Raised $width={17} aria-label="Уменьшить">
            <Icon w={13} h={13}><circle cx="6.5" cy="6.5" r="5.5" /><path d="M3 6.5h7" stroke="#000080" strokeWidth="2" /></Icon>
          </Raised>
          <Combo $width={68}>
            <ComboSelect $selected aria-label="Развёртка"><option>50 мс</option></ComboSelect>
            <ComboArrow $raised><Caret /></ComboArrow>
          </Combo>
          <Raised $width={17} aria-label="Увеличить">
            <Icon w={13} h={13}><circle cx="6.5" cy="6.5" r="5.5" /><path d="M3 6.5h7M6.5 3v7" stroke="#900000" strokeWidth="2" /></Icon>
          </Raised>
          <Combo $width={66}>
            <ComboSelect aria-label="Множитель"><option>8</option></ComboSelect>
            <ComboArrow><Caret /></ComboArrow>
          </Combo>
          <Raised $width={17} aria-label="Влево">
            <Icon w={5} h={8}><path d="M4 0v8L0 4z" fill="#000" stroke="none" /></Icon>
          </Raised>
          <ScrollTrack type="range" min="0" max="1000" defaultValue="772" aria-label="Прокрутка" />
          <Raised $width={17} aria-label="Вправо">
            <Icon w={5} h={8}><path d="M1 0v8l4-4z" fill="#000" stroke="none" /></Icon>
          </Raised>
          <PlayButton $width={24} aria-label="Воспроизвести">
            <Icon w={8} h={8}><path d="M0 0v8l8-4z" fill={blue} stroke="none" /></Icon>
          </PlayButton>
        </ScrollRow>
        <Splitter>
          <Caret color="#316ac5" />
          <SplitterDots />
          <Caret color="#316ac5" />
        </Splitter>
        <Panel>
          <ChannelGroup $width={373} aria-label="Канал">
            <Channel>
              <ChannelTabs>
                {["1", "2", "3", "4", "5", "6", "D"].map((c) => (
                  <ChannelButton key={c} $tone={c === "2" ? "red" : c === "3" ? "yellow" : undefined}>{c}</ChannelButton>
                ))}
              </ChannelTabs>
              <NameRow>
                <NameBox>
                  <NameInput aria-label="Имя канала" defaultValue="ДПКВ индуктивный" />
                  <MoreButton $width={17} aria-label="Выбрать датчик">
                    <Icon w={9} h={2}><path d="M0 1h2M3 1h2M6 1h2" strokeWidth="2" /></Icon>
                  </MoreButton>
                </NameBox>
                <PlainButton aria-label="Щуп"><ProbeIcon /></PlainButton>
              </NameRow>
              <IconRow>
                <SmallTool $width={30} $height={29} $pressed aria-label="Показать"><EyeIcon /></SmallTool>
                <SmallTool $width={30} $height={29} aria-label="Фильтр"><FilterIcon /></SmallTool>
                <SmallTool $width={30} $height={29} aria-label="Инверсия"><FlipIcon /></SmallTool>
                <SmallTool $width={30} $height={29} $pressed aria-label="Линии"><LinesIcon /></SmallTool>
                <SmallTool $width={30} $height={29} aria-label="Функция"><FxIcon /></SmallTool>
              </IconRow>
            </Channel>
            <Dial id="volt-rim" w={98} h={77} cx={46} cy={45} value="30В" marks={voltMarks} step={5} pointer={-14} />
          </ChannelGroup>
          <Group $width={106}>
            <GroupTitle $color="#000080">Частота</GroupTitle>
            <Dial id="rate-rim" w={104} h={71} cx={46} cy={42} value="100K" marks={rateMarks} step={13} pointer={-38} />
          </Group>
          <Group $width={137}>
            <GroupTitle $color="#aca899" $etched>Синхронизация</GroupTitle>
            <SyncTools>
              <SmallTool $width={26} $height={25} aria-label="Уровень синхронизации"><TriggerIcon /></SmallTool>
              <SmallTool $width={26} $height={25} aria-label="Фронт"><RiseIcon /></SmallTool>
              <SmallTool $width={26} $height={25} $pressed aria-label="Спад"><FallIcon /></SmallTool>
              <SmallTool $width={26} $height={25} aria-label="Указать уровень"><PickIcon /></SmallTool>
            </SyncTools>
            <SyncRow>
              <SyncCombo>
                <SyncSelect aria-label="Канал синхронизации"><option>2</option></SyncSelect>
                <CaretOver><Caret color="#aca899" /></CaretOver>
              </SyncCombo>
              <PlainButton aria-label="Центрировать"><SqueezeIcon /></PlainButton>
            </SyncRow>
          </Group>
          <Group $width={135}>
            <GroupTitle $color="#0046d5">Управление</GroupTitle>
            <RunGrid>
              <RunButton $kind="disabled" aria-label="Пауза"><PauseIcon /></RunButton>
              <RunButton aria-label="Осциллограмма"><SineIcon /></RunButton>
              <RunButton $kind="selected" aria-label="Поток"><StreamsIcon /></RunButton>
              <RunButton $wide>
                <Icon w={11} h={20}><path d="M1 1v18l9-9z" fill="#00f000" stroke="#509050" /></Icon>
                Пуск
              </RunButton>
              <Reading>5.51</Reading>
            </RunGrid>
          </Group>
        </Panel>
      </Page>
      <StatusBar>
        <StatusCell>USB Осциллограф не подключен</StatusCell>
        <StatusCell $grow />
      </StatusBar>
      <TaskBar><span /><span /><span /></TaskBar>
    </Window>
  );
}
